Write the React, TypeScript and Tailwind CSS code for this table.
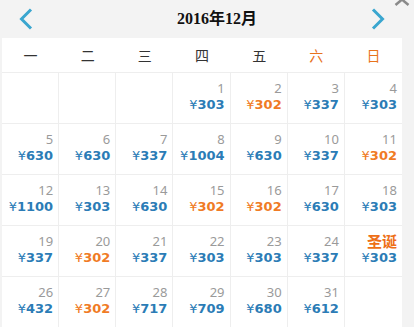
import React from 'react'

// December 2016 fare calendar: weekday header + 5 weeks, lowest fare in orange

type Day = { day: number | string; price: number; holiday?: boolean } | null

const weeks: Day[][] = [
  [null, null, null, { day: 1, price: 303 }, { day: 2, price: 302 }, { day: 3, price: 337 }, { day: 4, price: 303 }],
  [
    { day: 5, price: 630 },
    { day: 6, price: 630 },
    { day: 7, price: 337 },
    { day: 8, price: 1004 },
    { day: 9, price: 630 },
    { day: 10, price: 337 },
    { day: 11, price: 302 },
  ],
  [
    { day: 12, price: 1100 },
    { day: 13, price: 303 },
    { day: 14, price: 630 },
    { day: 15, price: 302 },
    { day: 16, price: 302 },
    { day: 17, price: 630 },
    { day: 18, price: 303 },
  ],
  [
    { day: 19, price: 337 },
    { day: 20, price: 302 },
    { day: 21, price: 337 },
    { day: 22, price: 303 },
    { day: 23, price: 303 },
    { day: 24, price: 337 },
    { day: '圣诞', price: 303, holiday: true },
  ],
  [
    { day: 26, price: 432 },
    { day: 27, price: 302 },
    { day: 28, price: 717 },
    { day: 29, price: 709 },
    { day: 30, price: 680 },
    { day: 31, price: 612 },
    null,
  ],
]

const weekdays = ['一', '二', '三', '四', '五', '六', '日']
const LOWEST = 302

function Chevron({ dir }: { dir: 'left' | 'right' }) {
  return (
    <svg width="14" height="22" viewBox="0 0 14 22" className="block">
      <path
        d={dir === 'left' ? 'M12 1.5 L2.5 11 L12 20.5' : 'M2 1.5 L11.5 11 L2 20.5'}
        fill="none"
        stroke="#3aa6cf"
        strokeWidth="3"
      />
    </svg>
  )
}

function Cell({ d, last }: { d: Day; last: boolean }) {
  return (
    <div
      className={`h-[51px] border-b border-[#eeeeee] ${last ? '' : 'border-r'} flex flex-col items-end pr-[5px] pt-[7px]`}
    >
      {d && (
        <>
          {d.holiday ? (
            <span className="text-[15px] leading-[16px] font-bold text-[#ee6f16] font-['Noto_Sans_CJK_SC',sans-serif]">
              {d.day}
            </span>
          ) : (
            <span className="text-[13px] leading-[16px] text-[#9a9a9a] font-['Noto_Sans',sans-serif]">{d.day}</span>
          )}
          <span
            className={`text-[13px] leading-[18px] font-bold font-['DejaVu_Sans',sans-serif] ${
              d.price === LOWEST ? 'text-[#f07b25]' : 'text-[#2b7cb6]'
            }`}
          >
            <span className="font-normal">¥</span>
            {d.price}
          </span>
        </>
      )}
    </div>
  )
}

export default function App() {
  return (
    <div className="relative w-[414px] h-[327px] overflow-hidden bg-[#f3f3f3]">
      {/* scroll-up hint, clipped at the top edge */}
      <svg width="16" height="8" viewBox="0 0 16 8" className="absolute right-[4px] top-[-2px]">
        <path d="M1.5 7 L8 1.5 L14.5 7" fill="none" stroke="#8a8a8a" strokeWidth="2.5" />
      </svg>

      <div className="h-[38px] flex items-center">
        <div className="ml-[19px]">
          <Chevron dir="left" />
        </div>
        <div className="ml-[144px] text-[16px] font-bold text-[#111] font-['Liberation_Serif','Noto_Sans_CJK_SC',serif]">
          2016年12月
        </div>
        <div className="ml-auto mr-[29px]">
          <Chevron dir="right" />
        </div>
      </div>

      <div className="ml-[2px] w-[400px] bg-white">
        <div className="grid grid-cols-7 h-[35px] border-b border-[#eeeeee]">
          {weekdays.map((w, i) => (
            <div
              key={w}
              className={`flex items-center justify-center text-[14px] font-['Noto_Sans_CJK_SC',sans-serif] ${
                i >= 5 ? 'text-[#e8731c]' : 'text-[#333333]'
              }`}
            >
              {w}
            </div>
          ))}
        </div>
        {weeks.map((week, r) => (
          <div key={r} className="grid grid-cols-7">
            {week.map((d, c) => (
              <Cell key={c} d={d} last={c === 6} />
            ))}
          </div>
        ))}
      </div>
    </div>
  )
}
